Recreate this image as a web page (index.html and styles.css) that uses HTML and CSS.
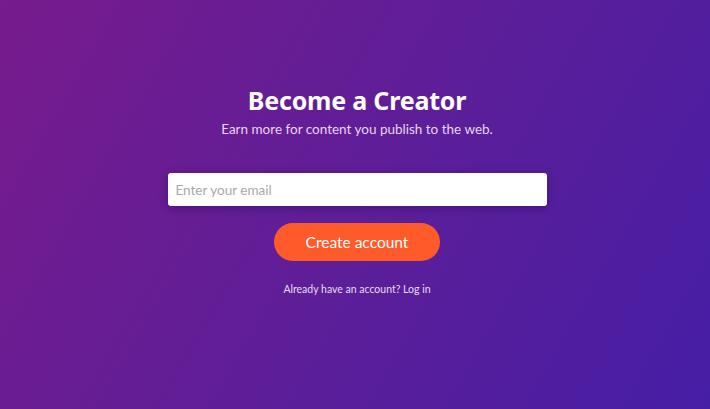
FILE: index.html
```html
<!DOCTYPE html>
<html lang="en">
<head>
    <meta charset="UTF-8">
    <title>Become a Creator</title>
    <link rel="stylesheet" href="styles.css">
    <meta name="viewport" content="width=device-width, initial-scale=1" />
</head>
<body>
<div class="signup">
    <h1 class="signup-title">Become a Creator</h1>
    <p class="signup-sub">Earn more for content you publish to the web.</p>
    <input class="signup-email" type="email" placeholder="Enter your email" />
    <button class="signup-btn" type="button">Create account</button>
    <p class="signup-login">Already have an account? <a href="#">Log in</a></p>
</div>
</body>
</html>
```

FILE: styles.css
```css
*{
    margin: 0px;
    padding: 0px;
    box-sizing: border-box;
}
html, body{
    height: 100%;
}
body{
    background: linear-gradient(120deg, #771b8d 0%, #5e1e98 50%, #461ea5 100%);
    font-family: Lato, "Noto Sans", sans-serif;
    color: #fff;
}
.signup{
    display: flex;
    flex-direction: column;
    align-items: center;
    padding-top: 83px;
    padding-left: 4px;
}
.signup-title{
    font-family: "Noto Sans", sans-serif;
    font-weight: 700;
    font-size: 25px;
    line-height: 34px;
    letter-spacing: -0.2px;
}
.signup-sub{
    margin-top: 3px;
    font-size: 13.5px;
    line-height: 18px;
    color: #e6d6f0;
}
.signup-email{
    margin-top: 35px;
    width: 379px;
    height: 33px;
    border: none;
    border-radius: 3px;
    padding: 0 8px;
    font-family: Lato, sans-serif;
    font-size: 13.5px;
    background: #fff;
    box-shadow: 0 2px 8px rgba(30, 0, 60, 0.35);
    outline: none;
}
.signup-email::placeholder{
    color: #a8a8a8;
}
.signup-btn{
    margin-top: 17px;
    width: 166px;
    height: 38px;
    border: none;
    border-radius: 19px;
    background: #ff5a2a;
    color: #fff;
    font-family: Lato, sans-serif;
    font-size: 15.5px;
}
.signup-login{
    margin-top: 22px;
    font-size: 10.5px;
    color: #e8dcf3;
}
.signup-login a{
    color: #e8dcf3;
    text-decoration: none;
}
```
